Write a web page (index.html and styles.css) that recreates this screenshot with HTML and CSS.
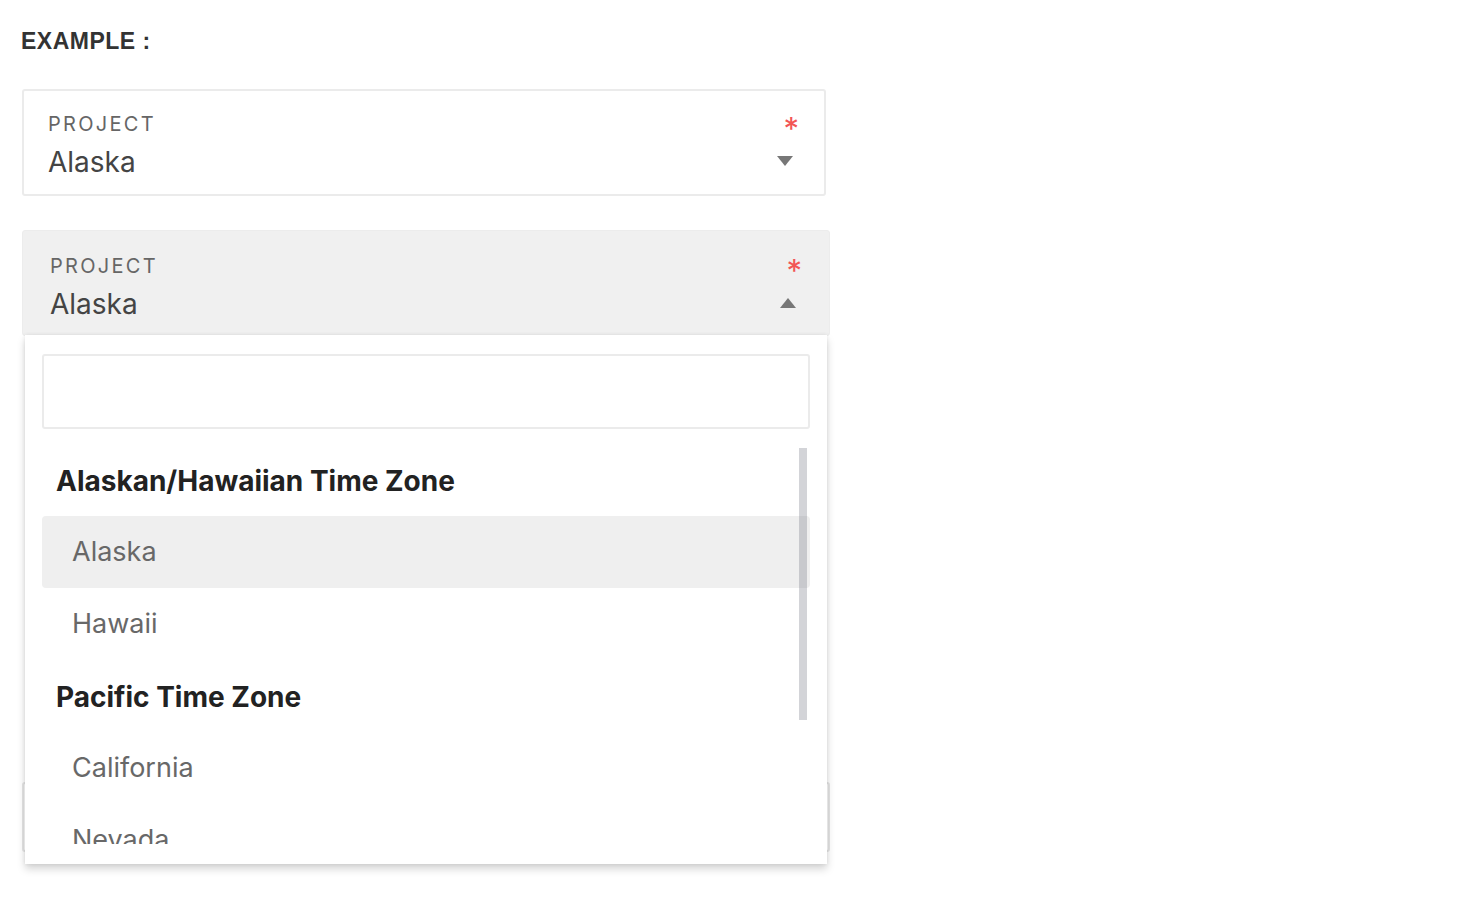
FILE: index.html
```html
<!DOCTYPE html>
<html lang="en">
<head>
<meta charset="utf-8">
<title>Example</title>
<link rel="stylesheet" href="styles.css">
</head>
<body>
<h1 class="title">EXAMPLE :</h1>
<div class="form">
  <div class="field">
    <div class="field-main">
      <div class="field-label">PROJECT</div>
      <div class="field-value">Alaska</div>
    </div>
    <div class="field-side">
      <span class="req">*</span>
      <svg class="caret" width="16" height="10" viewBox="0 0 16 10"><polygon points="0,0 16,0 8,10" fill="#777"/></svg>
    </div>
  </div>

  <div class="select-wrap">
    <div class="field field-open">
      <div class="field-main">
        <div class="field-label">PROJECT</div>
        <div class="field-value">Alaska</div>
      </div>
      <div class="field-side">
        <span class="req">*</span>
        <svg class="caret" width="16" height="10" viewBox="0 0 16 10"><polygon points="0,10 16,10 8,0" fill="#777"/></svg>
      </div>
    </div>
    <div class="menu">
      <div class="search"></div>
      <div class="list">
        <div class="group">Alaskan/Hawaiian Time Zone</div>
        <div class="option active">Alaska</div>
        <div class="option">Hawaii</div>
        <div class="group">Pacific Time Zone</div>
        <div class="option">California</div>
        <div class="option">Nevada</div>
        <div class="thumb"></div>
      </div>
    </div>
  </div>

  <div class="field field-behind"></div>
</div>
</body>
</html>
```
FILE: styles.css
```css
* { box-sizing: border-box; }
html, body { min-height: 898px; }
body {
  margin: 0;
  background: #fff;
  font-family: Inter, "Noto Sans", sans-serif;
}
.title {
  margin: 0;
  padding: 29px 0 0 21px;
  font: bold 23px/25px "Liberation Sans", Arial, sans-serif;
  letter-spacing: 0.5px;
  color: #333;
}
.form {
  padding: 35px 0 46px 22px;
}
.field {
  width: 804px;
  height: 107px;
  border: 2px solid #ebebeb;
  border-radius: 3px;
  padding: 0 25px 0 24px;
  display: flex;
  justify-content: space-between;
  background: #fff;
}
.field-main {
  padding-top: 22px;
}
.field-label {
  font-size: 20px;
  line-height: 23px;
  letter-spacing: 2.3px;
  color: #666;
}
.field-value {
  margin-top: 10px;
  font-size: 28px;
  line-height: 32px;
  color: #444;
}
.field-side {
  display: flex;
  flex-direction: column;
  align-items: flex-end;
  padding-top: 23px;
}
.req {
  color: #f25555;
  font-size: 31px;
  line-height: 30px;
  height: 30px;
}
.caret {
  display: block;
  margin-top: 12px;
  margin-right: 6px;
}
.select-wrap {
  position: relative;
  margin-top: 34px;
  width: 808px;
}
.field-open {
  width: 808px;
  height: 106px;
  background: #f0f0f0;
  border: 1px solid #ececec;
  padding-left: 27px;
  padding-right: 27px;
}
.field-open .field-main { padding-top: 24px; }
.field-open .field-side { padding-top: 25px; }
.field-open .caret { margin-top: 12px; }
.menu {
  position: absolute;
  top: 105px;
  left: 3px;
  width: 802px;
  height: 529px;
  background: #fff;
  padding: 19px 17px 19px 17px;
  box-shadow: 0 5px 8px rgba(0,0,0,0.17), 0 0 4px rgba(0,0,0,0.08);
  z-index: 2;
}
.search {
  height: 75px;
  border: 2px solid #ebebeb;
  border-radius: 3px;
}
.list {
  position: relative;
  margin-top: 15px;
  height: 400px;
  overflow: hidden;
}
.group {
  height: 72px;
  line-height: 74px;
  padding-left: 14px;
  font-size: 28px;
  font-weight: 700;
  color: #222;
}
.option {
  height: 72px;
  line-height: 72px;
  padding-left: 30px;
  font-size: 27px;
  font-weight: 400;
  color: #686868;
  border-radius: 4px;
}
.option.active { background: #efefef; }
.thumb {
  position: absolute;
  top: 4px;
  right: 3px;
  width: 8px;
  height: 272px;
  background: rgba(108, 114, 125, 0.3);
}
.field-behind {
  margin-top: 446px;
  width: 808px;
  height: 70px;
  border-color: #e6e6e6;
}
```
